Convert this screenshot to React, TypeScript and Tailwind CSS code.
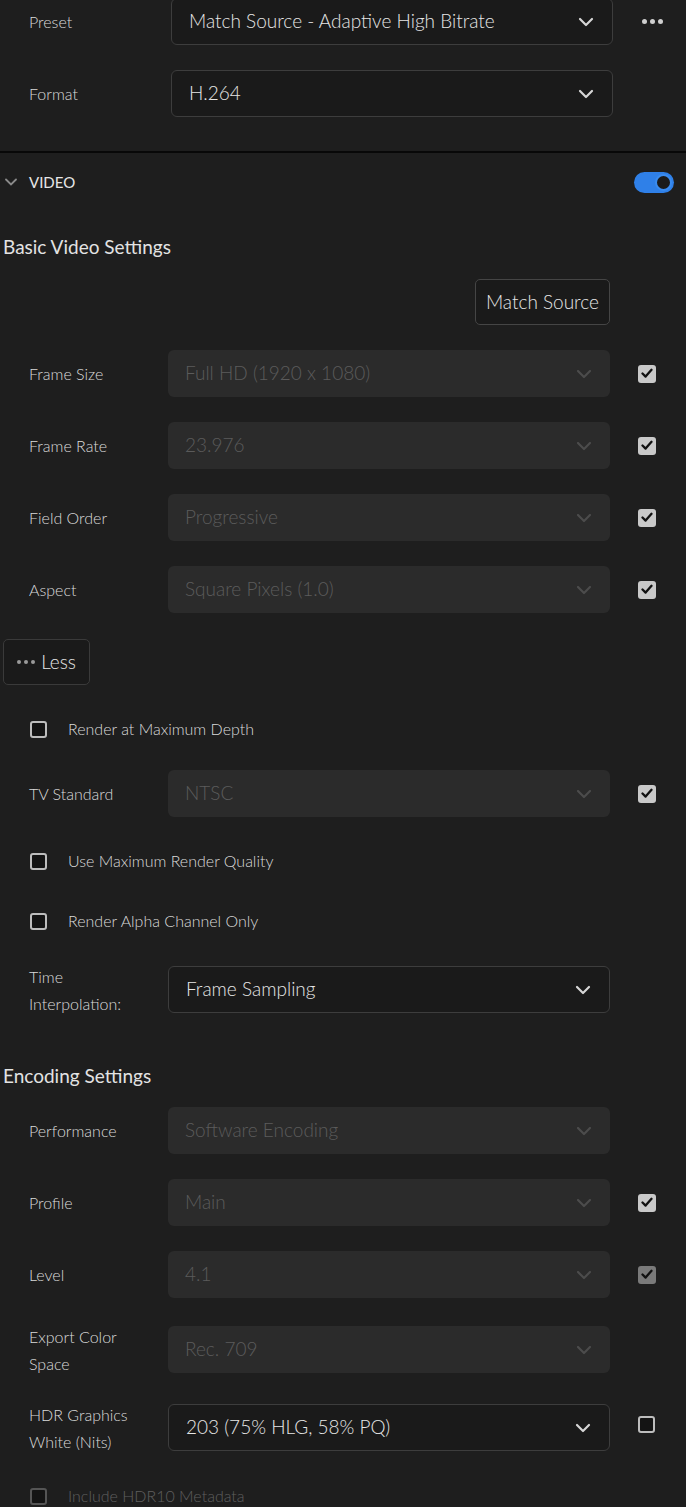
import React from "react";

const FONT = { fontFamily: "Lato, 'Open Sans', sans-serif" };

function Chevron({ dim }: { dim?: boolean }) {
  return (
    <svg width="16" height="10" viewBox="0 0 16 10" className="shrink-0">
      <path
        d="M2 2 L8 8 L14 2"
        fill="none"
        stroke={dim ? "#4c4c4c" : "#d6d6d6"}
        strokeWidth="2.2"
        strokeLinecap="round"
        strokeLinejoin="round"
      />
    </svg>
  );
}

function Checkbox({ checked, dim }: { checked?: boolean; dim?: boolean }) {
  if (checked) {
    return (
      <div
        className={`w-[18px] h-[18px] rounded-[3px] flex items-center justify-center ${
          dim ? "bg-[#7a7a7a]" : "bg-[#c9c9c9]"
        }`}
      >
        <svg width="12" height="11" viewBox="0 0 12 11">
          <path
            d="M1.5 5.5 L4.6 8.6 L10.5 1.8"
            fill="none"
            stroke="#111"
            strokeWidth="2.3"
            strokeLinecap="round"
            strokeLinejoin="round"
          />
        </svg>
      </div>
    );
  }
  return (
    <div
      className={`w-[17px] h-[17px] rounded-[3px] border-2 bg-[#141414] ${
        dim ? "border-[#555]" : "border-[#bdbdbd]"
      }`}
    />
  );
}

function Select({ value, disabled }: { value: string; disabled?: boolean }) {
  return (
    <div
      className={`h-[47px] w-[442px] shrink-0 flex items-center justify-between pl-[17px] pr-[18px] rounded-[6px] text-[19px] font-light ${
        disabled
          ? "bg-[#2b2b2b] text-[#5b5b5b]"
          : "bg-[#1a1a1a] border border-[#3d3d3d] text-[#e6e6e6]"
      }`}
    >
      <span>{value}</span>
      <Chevron dim={disabled} />
    </div>
  );
}

function Row({
  label,
  value,
  disabled,
  check,
  className = "",
}: {
  label: string;
  value: string;
  disabled?: boolean;
  check?: "on" | "on-dim" | "off" | null;
  className?: string;
}) {
  return (
    <div className={`h-[47px] flex items-center ${className}`}>
      <div className="w-[168px] shrink-0 pl-[29px] text-[16px] leading-[27px] font-light text-[#dadada] whitespace-pre-line">
        {label}
      </div>
      <Select value={value} disabled={disabled} />
      {check && (
        <div className={`ml-[28px] ${check === "off" ? "-mt-[6px]" : ""}`}>
          <Checkbox checked={check !== "off"} dim={check === "on-dim"} />
        </div>
      )}
    </div>
  );
}

function CheckRow({
  label,
  dim,
  className = "",
}: {
  label: string;
  dim?: boolean;
  className?: string;
}) {
  return (
    <div className={`h-[40px] flex items-center pl-[30px] ${className}`}>
      <Checkbox dim={dim} />
      <span
        className={`ml-[21px] text-[16px] font-light ${
          dim ? "text-[#5e5e5e]" : "text-[#dadada]"
        }`}
      >
        {label}
      </span>
    </div>
  );
}

export default function App() {
  return (
    <div className="w-[686px] h-[1507px] overflow-hidden bg-[#1e1e1e]" style={FONT}>
      {/* Preset / format */}
      <div className="h-[153px]">
        <div className="flex items-center mt-[-2px]">
          <div className="w-[171px] pl-[29px] text-[16px] font-light text-[#dadada]">Preset</div>
          <Select value="Match Source - Adaptive High Bitrate" />
          <div className="ml-[29px] flex gap-[3px]">
            <span className="w-[5px] h-[5px] rounded-full bg-[#cfcfcf]" />
            <span className="w-[5px] h-[5px] rounded-full bg-[#cfcfcf]" />
            <span className="w-[5px] h-[5px] rounded-full bg-[#cfcfcf]" />
          </div>
        </div>
        <div className="flex items-center mt-[25px]">
          <div className="w-[171px] pl-[29px] text-[16px] font-light text-[#dadada]">Format</div>
          <Select value="H.264" />
        </div>
      </div>
      <div className="h-[2px] bg-[#080808]" />

      {/* Video header */}
      <div className="h-[58px] flex items-center pl-[5px] pr-[12px]">
        <svg width="12" height="8" viewBox="0 0 12 8">
          <path
            d="M1 1.5 L6 6.5 L11 1.5"
            fill="none"
            stroke="#8a8a8a"
            strokeWidth="1.8"
            strokeLinecap="round"
          />
        </svg>
        <span className="ml-[12px] text-[15px] text-[#e6e6e6]">VIDEO</span>
        <div className="ml-auto w-[40px] h-[21px] rounded-full bg-[#2f80e8] flex items-center justify-end pr-[2px]">
          <div className="w-[17px] h-[17px] rounded-full bg-[#1b1b1b] border-2 border-[#3a8cf0]" />
        </div>
      </div>

      <div className="mt-[16px] h-[40px] flex items-center pl-[3px] text-[19px] text-[#e3e3e3]">
        Basic Video Settings
      </div>

      <div className="mt-[12px] flex justify-end pr-[76px]">
        <button className="h-[46px] px-[10px] rounded-[5px] border border-[#454545] bg-[#1a1a1a] text-[19px] font-light text-[#e6e6e6]">
          Match Source
        </button>
      </div>

      <Row className="mt-[25px]" label="Frame Size" value="Full HD (1920 x 1080)" disabled check="on" />
      <Row className="mt-[25px]" label="Frame Rate" value="23.976" disabled check="on" />
      <Row className="mt-[25px]" label="Field Order" value="Progressive" disabled check="on" />
      <Row className="mt-[25px]" label="Aspect" value="Square Pixels (1.0)" disabled check="on" />

      <div className="mt-[26px] pl-[3px]">
        <button className="h-[46px] w-[87px] flex items-center justify-center gap-[6px] rounded-[5px] border border-[#3a3a3a] bg-[#1a1a1a] text-[19px] font-light text-[#e6e6e6]">
          <span className="flex gap-[3px]">
            <span className="w-[4px] h-[4px] rounded-full bg-[#9a9a9a]" />
            <span className="w-[4px] h-[4px] rounded-full bg-[#9a9a9a]" />
            <span className="w-[4px] h-[4px] rounded-full bg-[#9a9a9a]" />
          </span>
          Less
        </button>
      </div>

      <CheckRow className="mt-[24px]" label="Render at Maximum Depth" />
      <Row className="mt-[21px]" label="TV Standard" value="NTSC" disabled check="on" />
      <CheckRow className="mt-[24px]" label="Use Maximum Render Quality" />
      <CheckRow className="mt-[20px]" label="Render Alpha Channel Only" />
      <Row className="mt-[25px]" label={"Time\nInterpolation:"} value="Frame Sampling" />

      <div className="mt-[43px] h-[40px] flex items-center pl-[3px] text-[19px] text-[#e3e3e3]">
        Encoding Settings
      </div>

      <Row className="mt-[11px]" label="Performance" value="Software Encoding" disabled />
      <Row className="mt-[25px]" label="Profile" value="Main" disabled check="on" />
      <Row className="mt-[25px]" label="Level" value="4.1" disabled check="on-dim" />
      <Row className="mt-[28px]" label={"Export Color\nSpace"} value="Rec. 709" disabled />
      <Row className="mt-[31px]" label={"HDR Graphics\nWhite (Nits)"} value="203 (75% HLG, 58% PQ)" check="off" />
      <CheckRow className="mt-[25px]" label="Include HDR10 Metadata" dim />
    </div>
  );
}
